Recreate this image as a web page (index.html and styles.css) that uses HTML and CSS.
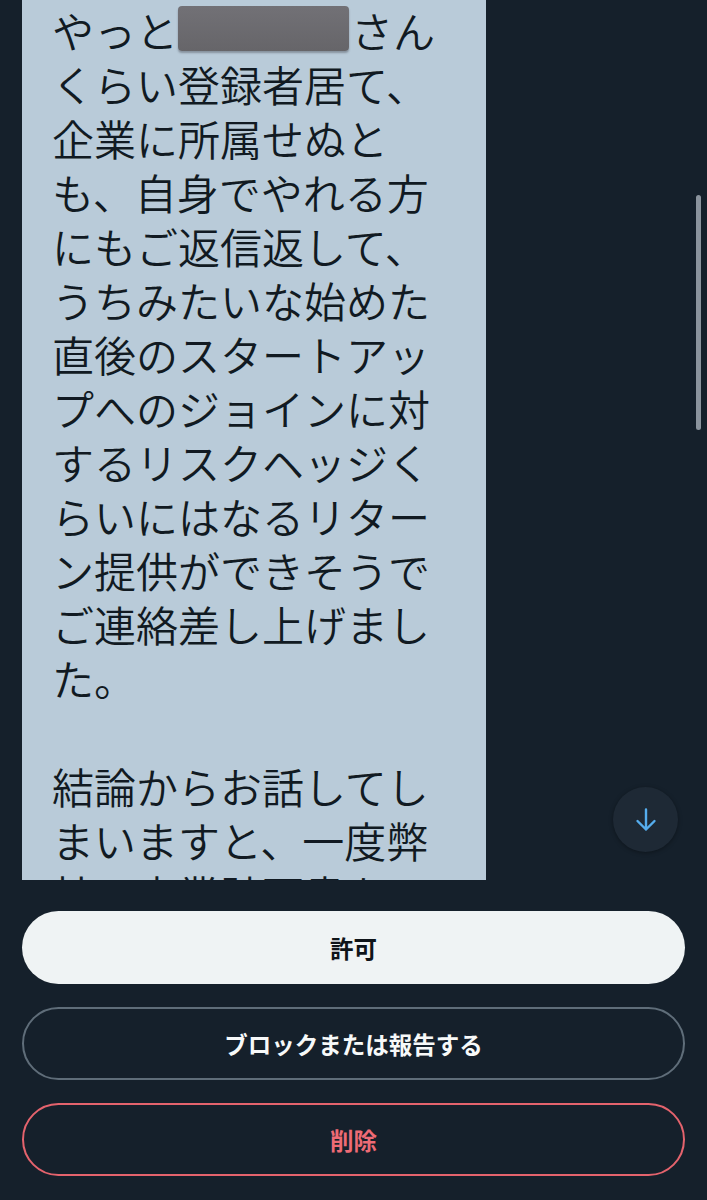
FILE: index.html
```html
<!DOCTYPE html>
<html lang="ja">
<head>
<meta charset="utf-8">
<title>メッセージリクエスト</title>
<link rel="stylesheet" href="styles.css">
</head>
<body>
<div class="screen">
  <div class="thread">
    <div class="bubble">
      <p class="msg">やっと<span class="redact"></span>さん<br>くらい登録者居て、<br>企業に所属せぬと<br>も、自身でやれる方<br>にもご返信返して、<br>うちみたいな始めた<br>直後のスタートアッ<br>プへのジョインに対<br>するリスクヘッジく<br>らいにはなるリター<br>ン提供ができそうで<br>ご連絡差し上げまし<br>た。<br><br>結論からお話してし<br>まいますと、一度弊<br>社の事業計画書を</p>
    </div>
    <div class="scrollbar"></div>
    <button class="scroll-down" aria-label="下へ">
      <svg width="28" height="28" viewBox="0 0 28 28" fill="none" stroke="#55adee" stroke-width="2.4" stroke-linecap="round" stroke-linejoin="round"><path d="M14 3.5v20M5.5 15l8.5 8.5 8.5-8.5"/></svg>
    </button>
  </div>
  <div class="actions">
    <button class="btn btn-primary">許可</button>
    <button class="btn btn-outline">ブロックまたは報告する</button>
    <button class="btn btn-danger">削除</button>
  </div>
</div>
</body>
</html>
```
FILE: styles.css
```css
html, body {
  margin: 0;
  padding: 0;
  background: #15202b;
}
body {
  font-family: "Noto Sans CJK JP", "Noto Sans", sans-serif;
}
.screen {
  width: 707px;
  height: 1200px;
  display: flex;
  flex-direction: column;
  background: #15202b;
}
.thread {
  position: relative;
  height: 880px;
  overflow: hidden;
}
.bubble {
  margin-left: 22px;
  width: 464px;
  height: 100%;
  box-sizing: border-box;
  padding: 3px 0 0 30px;
  background: #b9cbd9;
}
.msg {
  margin: 0;
  font-size: 42px;
  font-weight: 350;
  line-height: 54px;
  color: #111a22;
  white-space: nowrap;
}
.redact {
  display: inline-block;
  width: 171px;
  height: 45px;
  margin: 0 2px 0 0;
  vertical-align: -3px;
  background: linear-gradient(#727176, #666569);
  border-radius: 4px;
  box-shadow: 0 2px 2px rgba(40, 40, 50, 0.35);
}
.scrollbar {
  position: absolute;
  left: 696px;
  top: 195px;
  width: 5px;
  height: 235px;
  border-radius: 3px;
  background: #8a939d;
}
.scroll-down {
  position: absolute;
  left: 613px;
  top: 787px;
  width: 65px;
  height: 65px;
  border: none;
  border-radius: 50%;
  background: #1e2935;
  box-shadow: 0 1px 4px rgba(0, 0, 0, 0.35);
  display: flex;
  align-items: center;
  justify-content: center;
  padding: 0;
}
.actions {
  display: flex;
  flex-direction: column;
  gap: 23px;
  padding: 31px 22px 0;
}
.btn {
  height: 73px;
  border-radius: 37px;
  font-family: "Noto Sans CJK JP", "Noto Sans", sans-serif;
  font-size: 23.5px;
  font-weight: 700;
  display: flex;
  align-items: center;
  justify-content: center;
  padding: 0;
  box-sizing: border-box;
}
.btn-primary {
  background: #eff3f4;
  color: #0f1419;
  border: none;
}
.btn-outline {
  background: transparent;
  color: #f7f9f9;
  border: 2px solid #5f6d79;
}
.btn-danger {
  background: transparent;
  color: #ee6b75;
  border: 2px solid #e4636d;
}
```
